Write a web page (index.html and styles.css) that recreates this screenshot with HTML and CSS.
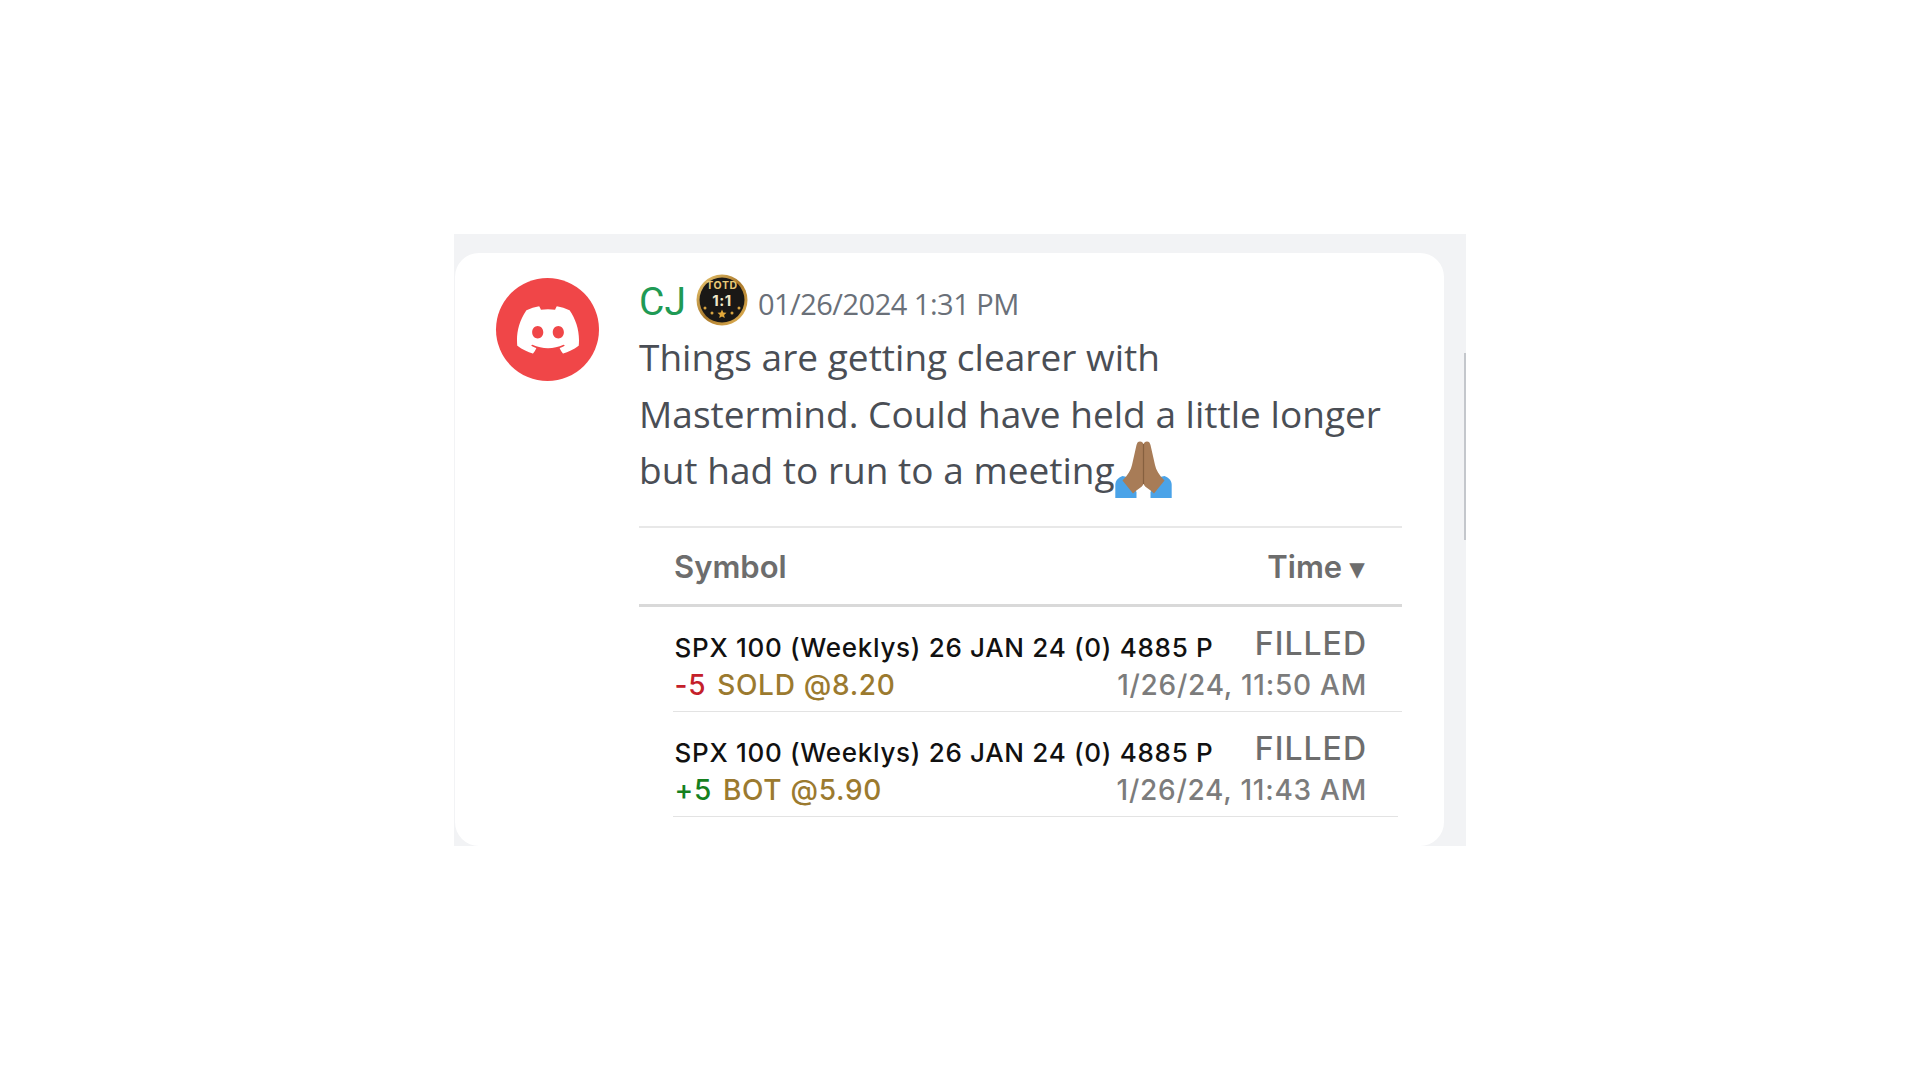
FILE: index.html
```html
<!DOCTYPE html>
<html lang="en">
<head>
<meta charset="utf-8">
<title>CJ message</title>
<link rel="stylesheet" href="styles.css">
</head>
<body>
<div class="panel">
  <div class="scrollbar"></div>
  <div class="card">
    <div class="avatar">
      <svg class="discord" viewBox="0 0 24 24"><path fill="#fff" d="M20.317 4.3698a19.7913 19.7913 0 00-4.8851-1.5152.0741.0741 0 00-.0785.0371c-.211.3753-.4447.8648-.6083 1.2495-1.8447-.2762-3.68-.2762-5.4868 0-.1636-.3933-.4058-.8742-.6177-1.2495a.077.077 0 00-.0785-.037 19.7363 19.7363 0 00-4.8852 1.515.0699.0699 0 00-.0321.0277C.5334 9.0458-.319 13.5799.0992 18.0578a.0824.0824 0 00.0312.0561c2.0528 1.5076 4.0413 2.4228 5.9929 3.0294a.0777.0777 0 00.0842-.0276c.4616-.6304.8731-1.2952 1.226-1.9942a.076.076 0 00-.0416-.1057c-.6528-.2476-1.2743-.5495-1.8722-.8923a.077.077 0 01-.0076-.1277c.1258-.0943.2517-.1923.3718-.2914a.0743.0743 0 01.0776-.0105c3.9278 1.7933 8.18 1.7933 12.0614 0a.0739.0739 0 01.0785.0095c.1202.099.246.1981.3728.2924a.077.077 0 01-.0066.1276 12.2986 12.2986 0 01-1.873.8914.0766.0766 0 00-.0407.1067c.3604.698.7719 1.3628 1.225 1.9932a.076.076 0 00.0842.0286c1.961-.6067 3.9495-1.5219 6.0023-3.0294a.077.077 0 00.0313-.0552c.5004-5.177-.8382-9.6739-3.5485-13.6604a.061.061 0 00-.0312-.0286zM8.02 15.3312c-1.1825 0-2.1569-1.0857-2.1569-2.419 0-1.3332.9555-2.4189 2.157-2.4189 1.2108 0 2.1757 1.0952 2.1568 2.419 0 1.3332-.9555 2.4189-2.1569 2.4189zm7.9748 0c-1.1825 0-2.1569-1.0857-2.1569-2.419 0-1.3332.9554-2.4189 2.1569-2.4189 1.2108 0 2.1757 1.0952 2.1568 2.419 0 1.3332-.946 2.4189-2.1568 2.4189Z"/></svg>
    </div>
    <div class="content">
      <div class="head">
        <span class="name">CJ</span>
        <svg class="badge" viewBox="0 0 52 52">
          <defs>
            <linearGradient id="gold" x1="0" y1="0" x2="1" y2="1">
              <stop offset="0" stop-color="#f0cf78"/>
              <stop offset=".5" stop-color="#a9782a"/>
              <stop offset="1" stop-color="#e8b95a"/>
            </linearGradient>
          </defs>
          <circle cx="26" cy="26" r="25.5" fill="url(#gold)"/>
          <circle cx="26" cy="26" r="22.5" fill="#1a1816"/>
          <text class="badge-top" x="26" y="15" text-anchor="middle">TOTD</text>
          <text class="badge-ratio" x="26" y="32" text-anchor="middle">1:1</text>
          <circle cx="9" cy="34" r="1.5" fill="#d9a441"/>
          <circle cx="43" cy="34" r="1.5" fill="#d9a441"/>
          <circle cx="16" cy="39" r="1.5" fill="#d9a441"/>
          <circle cx="36" cy="39" r="1.5" fill="#d9a441"/>
          <polygon points="26,35.500 27.300,38.500 30.500,38.800 28.100,40.900 28.800,44 26,42.400 23.200,44 23.900,40.900 21.500,38.800 24.700,38.500" fill="#e3a83a"/>
        </svg>
        <span class="stamp">01/26/2024 1:31 PM</span>
      </div>
      <p class="message">Things are getting clearer with<br>Mastermind. Could have held a little longer<br>but had to run to a meeting<svg class="pray" viewBox="0 0 57 57"><path fill="#4aa3e8" d="M7.500 35C3 36.500 .3 40 .3 44V57H21.500V51L12 36Z"/><path fill="#4aa3e8" d="M49.500 35C54 36.500 56.700 40 56.700 44V57H35.500V51L45 36Z"/><path fill="#a87c57" d="M25 .5C23 .5 22.200 1.500 21.500 4L17 24C16 29 13 34 7.500 39.500L18 52.500C20.500 50 23 48 25.500 46.500C27.500 45.300 28.500 43.500 28.500 42V4C28.500 2 27 .5 25 .5Z"/><path fill="#a87c57" d="M32 .5C34 .5 34.800 1.500 35.500 4L40 24C41 29 44 34 49.500 39.500L39 52.500C36.500 50 34 48 31.500 46.500C29.500 45.300 28.500 43.500 28.500 42V4C28.500 2 30 .5 32 .5Z"/><path fill="none" stroke="#86603f" stroke-width="1.200" d="M28.500 3V43"/></svg></p>
      <div class="table">
        <div class="thead">
          <span>Symbol</span>
          <span>Time <span class="caret">▾</span></span>
        </div>
        <div class="row">
          <div class="line top">
            <span class="title">SPX 100 (Weeklys) 26 JAN 24 (0) 4885 P</span>
            <span class="status">FILLED</span>
          </div>
          <div class="line">
            <span><span class="qty sold">-5</span><span class="price">SOLD @8.20</span></span>
            <span class="when">1/26/24, 11:50 AM</span>
          </div>
        </div>
        <div class="row last">
          <div class="line top">
            <span class="title">SPX 100 (Weeklys) 26 JAN 24 (0) 4885 P</span>
            <span class="status">FILLED</span>
          </div>
          <div class="line">
            <span><span class="qty bot">+5</span><span class="price">BOT @5.90</span></span>
            <span class="when">1/26/24, 11:43 AM</span>
          </div>
        </div>
      </div>
    </div>
  </div>
</div>
</body>
</html>
```

FILE: styles.css
```css
* { box-sizing: border-box; }
html, body { margin: 0; padding: 0; background: #fff; }
body {
  min-height: 100vh;
  display: flex;
  align-items: center;
  justify-content: center;
  font-family: "Open Sans", "Noto Sans", sans-serif;
}
.panel {
  position: relative;
  width: 1012px;
  height: 612px;
  padding: 19px 22px 0 1px;
  background: #f2f3f5;
  overflow: hidden;
}
.scrollbar {
  position: absolute;
  right: 0;
  top: 119px;
  width: 2px;
  height: 187px;
  background: #c4c7cc;
}
.card {
  display: flex;
  height: 593px;
  padding: 24px 0 0 41px;
  background: #fff;
  border-radius: 24px;
}
.avatar {
  flex: none;
  width: 103px;
  height: 103px;
  margin-top: 1px;
  display: flex;
  align-items: center;
  justify-content: center;
  border-radius: 50%;
  background: #f04648;
}
.discord { width: 62px; height: 62px; }
.content { flex: none; width: 763px; margin-left: 40px; }
.head { display: flex; align-items: baseline; height: 52px; }
.name { font-family: Roboto, sans-serif; font-size: 39px; line-height: 50px; color: #1f9a55; }
.badge { width: 52px; height: 52px; margin-left: 10px; margin-top: -3px; align-self: flex-start; flex: none; }
.badge-top { font: 700 10.500px Inter, sans-serif; letter-spacing: 0.6px; fill: #e9c877; }
.badge-ratio { font: 700 15px Inter, sans-serif; letter-spacing: 0.5px; fill: #efe6c8; }
.stamp { margin-left: 10px; font-size: 29px; line-height: 50px; color: #6a7079; letter-spacing: -0.5px; }
.message {
  margin: 0;
  font-size: 37px;
  font-weight: 400;
  letter-spacing: 0.02px;
  line-height: 56.500px;
  color: #4a4e55;
  white-space: nowrap;
}
.pray { width: 57px; height: 57px; margin-top: -14px; vertical-align: -14px; }
.table {
  margin-top: 27px;
  font-family: Inter, "Liberation Sans", sans-serif;
}
.thead {
  display: flex;
  justify-content: space-between;
  align-items: center;
  height: 81px;
  padding: 1px 38px 0 35px;
  border-top: 2px solid #e8e8e8;
  border-bottom: 3px solid #d9d9d9;
  font-size: 31px;
  font-weight: 600;
  color: #6d6d6d;
}
.caret { font-size: 28px; }
.row {
  margin-left: 34px;
  height: 105px;
  padding: 20px 35px 0 1.500px;
  border-bottom: 1px solid #e3e3e3;
}
.row.last { margin-right: 4px; padding-right: 31px; }
.line {
  display: flex;
  justify-content: space-between;
  align-items: baseline;
  height: 39px;
  line-height: 39px;
}
.line.top { align-items: flex-start; }
.title { font-size: 26px; font-weight: 500; letter-spacing: 0.7px; color: #111; margin-top: 1px; }
.status { font-size: 32px; font-weight: 500; letter-spacing: 1px; color: #6d6d6d; margin-top: -3px; }
.qty { font-size: 28px; font-weight: 500; letter-spacing: 0.7px; margin-right: 11px; }
.sold { color: #c4202a; }
.bot { color: #15801e; }
.price { font-size: 28px; font-weight: 500; letter-spacing: 0.7px; color: #9b7a2f; }
.when { font-size: 28px; font-weight: 500; letter-spacing: 0.75px; color: #7c7c7c; }
```
